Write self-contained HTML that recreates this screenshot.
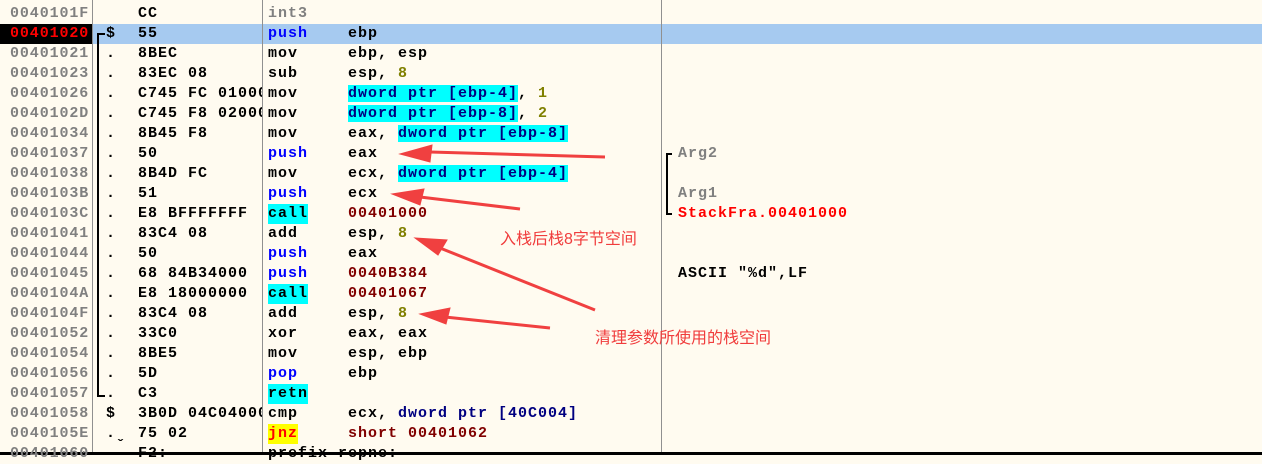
<!DOCTYPE html><html><head><meta charset="utf-8"><style>
body{margin:0;width:1262px;height:455px;overflow:hidden;background:#fffbf0;position:relative;font:bold 15px "Liberation Mono",monospace;}
.r{position:absolute;left:0;width:1262px;height:20px;line-height:20px;white-space:pre;letter-spacing:1px}
.r span{position:absolute;top:0}
.a{left:10px;color:#808080;letter-spacing:.9px}
.m{left:106px}
.h{left:138px;width:124px;overflow:hidden}
.i{left:268px}
.o{left:348px}
.c{left:678px}
.cy{background:#00ffff}
.n{color:#000080}.b{color:#0000ff}.y{color:#808000}.d{color:#800000}
.v{position:absolute;top:0;width:1px;height:452px;background:#909090}
.cn{position:absolute;color:#f03c3c;font:16px "Liberation Sans","Noto Sans CJK SC",sans-serif}
</style></head><body>
<div class="r" style="top:24px;background:#a6caf0"></div>
<div style="position:absolute;left:0;top:24px;width:92px;height:20px;background:#000"></div>
<div class="v" style="left:92px"></div><div class="v" style="left:262px"></div><div class="v" style="left:661px"></div>
<div style="position:absolute;left:0;top:452px;width:1262px;height:3px;background:#000"></div>
<div class="r" style="top:4px"><span class="a">0040101F</span><span class="h">CC</span><span class="i" style="color:#808080">int3</span></div>
<div class="r" style="top:24px"><span class="a" style="color:#ff0000">00401020</span><span class="m">$</span><span class="h">55</span><span class="i b">push</span><span class="o">ebp</span></div>
<div class="r" style="top:44px"><span class="a">00401021</span><span class="m">.</span><span class="h">8BEC</span><span class="i">mov</span><span class="o">ebp, esp</span></div>
<div class="r" style="top:64px"><span class="a">00401023</span><span class="m">.</span><span class="h">83EC 08</span><span class="i">sub</span><span class="o">esp, <b class="y">8</b></span></div>
<div class="r" style="top:84px"><span class="a">00401026</span><span class="m">.</span><span class="h">C745 FC 01000000</span><span class="i">mov</span><span class="o"><b class="cy n">dword ptr [ebp-4]</b>, <b class="y">1</b></span></div>
<div class="r" style="top:104px"><span class="a">0040102D</span><span class="m">.</span><span class="h">C745 F8 02000000</span><span class="i">mov</span><span class="o"><b class="cy n">dword ptr [ebp-8]</b>, <b class="y">2</b></span></div>
<div class="r" style="top:124px"><span class="a">00401034</span><span class="m">.</span><span class="h">8B45 F8</span><span class="i">mov</span><span class="o">eax, <b class="cy n">dword ptr [ebp-8]</b></span></div>
<div class="r" style="top:144px"><span class="a">00401037</span><span class="m">.</span><span class="h">50</span><span class="i b">push</span><span class="o">eax</span><span class="c" style="color:#808080">Arg2</span></div>
<div class="r" style="top:164px"><span class="a">00401038</span><span class="m">.</span><span class="h">8B4D FC</span><span class="i">mov</span><span class="o">ecx, <b class="cy n">dword ptr [ebp-4]</b></span></div>
<div class="r" style="top:184px"><span class="a">0040103B</span><span class="m">.</span><span class="h">51</span><span class="i b">push</span><span class="o">ecx</span><span class="c" style="color:#808080">Arg1</span></div>
<div class="r" style="top:204px"><span class="a">0040103C</span><span class="m">.</span><span class="h">E8 BFFFFFFF</span><span class="i cy">call</span><span class="o d">00401000</span><span class="c" style="color:#ff0000">StackFra.00401000</span></div>
<div class="r" style="top:224px"><span class="a">00401041</span><span class="m">.</span><span class="h">83C4 08</span><span class="i">add</span><span class="o">esp, <b class="y">8</b></span></div>
<div class="r" style="top:244px"><span class="a">00401044</span><span class="m">.</span><span class="h">50</span><span class="i b">push</span><span class="o">eax</span></div>
<div class="r" style="top:264px"><span class="a">00401045</span><span class="m">.</span><span class="h">68 84B34000</span><span class="i b">push</span><span class="o d">0040B384</span><span class="c">ASCII "%d",LF</span></div>
<div class="r" style="top:284px"><span class="a">0040104A</span><span class="m">.</span><span class="h">E8 18000000</span><span class="i cy">call</span><span class="o d">00401067</span></div>
<div class="r" style="top:304px"><span class="a">0040104F</span><span class="m">.</span><span class="h">83C4 08</span><span class="i">add</span><span class="o">esp, <b class="y">8</b></span></div>
<div class="r" style="top:324px"><span class="a">00401052</span><span class="m">.</span><span class="h">33C0</span><span class="i">xor</span><span class="o">eax, eax</span></div>
<div class="r" style="top:344px"><span class="a">00401054</span><span class="m">.</span><span class="h">8BE5</span><span class="i">mov</span><span class="o">esp, ebp</span></div>
<div class="r" style="top:364px"><span class="a">00401056</span><span class="m">.</span><span class="h">5D</span><span class="i b">pop</span><span class="o">ebp</span></div>
<div class="r" style="top:384px"><span class="a">00401057</span><span class="m">.</span><span class="h">C3</span><span class="i cy">retn</span></div>
<div class="r" style="top:404px"><span class="a">00401058</span><span class="m">$</span><span class="h">3B0D 04C04000</span><span class="i">cmp</span><span class="o">ecx, <b class="n">dword ptr [40C004]</b></span></div>
<div class="r" style="top:424px"><span class="a">0040105E</span><span class="m">.ˬ</span><span class="h">75 02</span><span class="i" style="background:#ffff00;color:#ff0000">jnz</span><span class="o d">short 00401062</span></div>
<div class="r" style="top:444px"><span class="a">00401060</span><span class="h">F2:</span><span class="i">prefix repne:</span></div>
<svg width="1262" height="455" style="position:absolute;left:0;top:0">
<path d="M105 34H98V396H105" fill="none" stroke="#000" stroke-width="2"/>
<path d="M672 154H667V214H672" fill="none" stroke="#000" stroke-width="2"/>
<g fill="#f04040" stroke="#f04040">
<path d="M605 157L430 152" stroke-width="3"/><path d="M400 154L432 145L430 162Z"/>
<path d="M520 209L420 197" stroke-width="3"/><path d="M392 194L424 189L420 205Z"/>
<path d="M595 310L440 248" stroke-width="3"/><path d="M415 238L447 240L438 255Z"/>
<path d="M550 328L445 317" stroke-width="3"/><path d="M420 314L450 308L446 324Z"/>
</g></svg>
<div class="cn" style="left:500px;top:225px">入栈后栈8字节空间</div>
<div class="cn" style="left:595px;top:324px">清理参数所使用的栈空间</div>
</body></html>
